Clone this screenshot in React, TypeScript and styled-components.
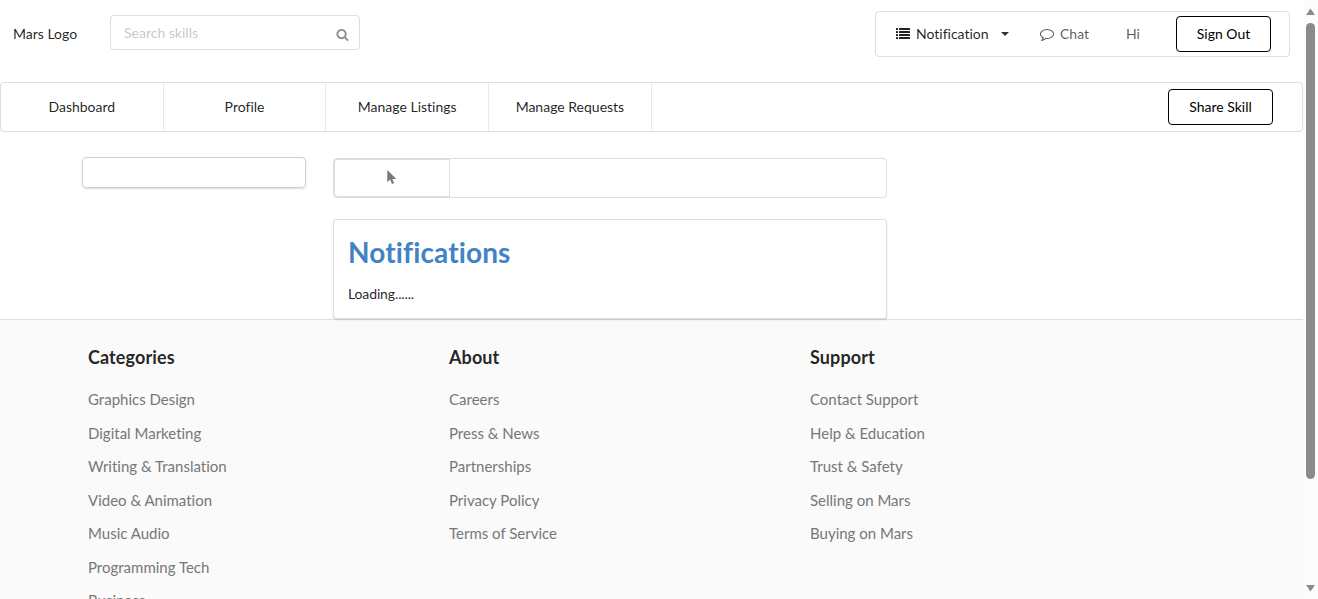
import React from "react";
import styled, { createGlobalStyle } from "styled-components";

const GlobalStyle = createGlobalStyle`
  *, *::before, *::after { box-sizing: border-box; }
  body {
    margin: 0;
    background: #fff;
    color: rgba(0, 0, 0, 0.87);
    font: 14px/20px Lato, "Liberation Sans", sans-serif;
    font-variant-ligatures: none;
    overflow: hidden;
  }
`;

const Window = styled.div`
  display: flex;
  height: 599px;
  overflow: hidden;
`;

const Page = styled.div`
  flex: 0 0 1303px;
  display: flex;
  flex-direction: column;
  overflow: hidden;
`;

const Header = styled.header`
  display: flex;
  flex: none;
  align-items: flex-start;
  height: 82px;
  padding: 11px 13px 0;
`;

const Logo = styled.div`
  width: 97px;
  padding-top: 13px;
`;

const SearchBox = styled.div`
  display: flex;
  align-items: center;
  justify-content: space-between;
  width: 250px;
  height: 35px;
  margin-top: 4px;
  padding: 0 10px 0 13px;
  border: 1px solid rgba(34, 36, 38, 0.15);
  border-radius: 4px;
`;

const SearchInput = styled.input`
  width: 180px;
  padding: 0;
  border: 0;
  outline: 0;
  background: transparent;
  font: inherit;
  font-variant-ligatures: none;
  color: inherit;
  &::placeholder { color: rgba(191, 191, 191, 0.87); }
`;

const Icon = styled.svg<{ $size: number; $opacity?: number }>`
  display: block;
  flex: none;
  width: ${(p) => p.$size}px;
  height: ${(p) => p.$size}px;
  fill: currentColor;
  opacity: ${(p) => p.$opacity ?? 1};
`;

const SearchIconWrap = styled.span`
  padding-top: 4px;
`;

const UserMenu = styled.div`
  display: flex;
  align-items: center;
  width: 415px;
  height: 46px;
  margin-left: auto;
  padding: 0 18px 0 20px;
  border: 1px solid rgba(34, 36, 38, 0.15);
  border-radius: 4px;
`;

const UserItem = styled.span<{ $muted?: boolean; $width: number }>`
  display: flex;
  flex: none;
  align-items: center;
  gap: 6px;
  width: ${(p) => p.$width}px;
  color: ${(p) => (p.$muted ? "rgba(0, 0, 0, 0.66)" : "rgba(0, 0, 0, 0.87)")};
`;

const Caret = styled.i`
  margin-left: 6px;
  border: 4px solid transparent;
  border-top-color: rgba(0, 0, 0, 0.8);
  border-bottom: 0;
`;

const OutlineButton = styled.button<{ $width: number }>`
  flex: none;
  width: ${(p) => p.$width}px;
  height: 36px;
  padding: 0;
  border: 1px solid #000;
  border-radius: 4px;
  background: #fff;
  color: #000;
  font: inherit;
  font-variant-ligatures: none;
`;

const Nav = styled.nav`
  display: flex;
  flex: none;
  align-items: center;
  height: 50px;
  padding-right: 29px;
  border: 1px solid rgba(34, 36, 38, 0.15);
  border-radius: 4px;
`;

const NavItem = styled.a`
  display: flex;
  align-items: center;
  justify-content: center;
  width: 162.7px;
  height: 48px;
  border-right: 1px solid rgba(34, 36, 38, 0.1);
`;

const NavAction = styled.div`
  margin-left: auto;
`;

const Content = styled.main`
  display: flex;
  flex: none;
  align-items: flex-start;
  gap: 27px;
  height: 187px;
  padding: 25px 0 0 82px;
`;

const SidePanel = styled.aside`
  width: 224px;
  height: 31px;
  border: 1px solid #d0d0d1;
  border-radius: 4px;
  box-shadow: 0 1px 2px rgba(34, 36, 38, 0.15);
`;

const Column = styled.section`
  position: relative;
  width: 554px;
  padding-top: 1px;
`;

const TabBar = styled.div`
  height: 40px;
  border: 1px solid rgba(34, 36, 38, 0.15);
  border-radius: 4px;
`;

const Tab = styled.div`
  display: flex;
  align-items: center;
  justify-content: center;
  width: 116px;
  height: 38px;
  padding-bottom: 2px;
  border: 1px solid rgba(34, 36, 38, 0.15);
  border-radius: 3px 0 0 3px;
  color: #777;
`;

const Card = styled.article`
  height: 100px;
  margin-top: 21px;
  padding: 14px;
  border: 1px solid rgba(34, 36, 38, 0.15);
  border-radius: 4px;
  background: #fff;
  box-shadow: 0 1px 2px rgba(34, 36, 38, 0.15);
`;

const Title = styled.h1`
  margin: 0 0 14px;
  color: #4183c4;
  font-size: 28px;
  line-height: 36px;
  font-weight: 700;
  letter-spacing: 0.13px;
`;

const Status = styled.p`
  margin: 0;
  letter-spacing: -0.13px;
`;

const Footer = styled.footer`
  display: flex;
  flex: 1 0 0;
  min-height: 0;
  padding: 25px 88px 0;
  border-top: 1px solid rgba(34, 36, 38, 0.12);
  background: #fafafa;
`;

const FooterColumn = styled.div`
  width: 361px;
`;

const FooterTitle = styled.h3`
  margin: 0 0 13px;
  font-size: 18px;
  line-height: 25px;
  font-weight: 700;
  letter-spacing: 0.1px;
`;

const FooterLinks = styled.ul`
  margin: 0;
  padding: 0;
  list-style: none;
`;

const FooterLink = styled.li`
  height: 33.5px;
  color: #777;
  font-size: 15px;
  line-height: 32px;
`;

const Scrollbar = styled.div`
  display: flex;
  flex: 0 0 15px;
  flex-direction: column;
  align-items: center;
  padding: 8px 0 7px;
  background: #fcfcfc;
`;

const Arrow = styled.svg`
  display: block;
  width: 9px;
  height: 8px;
  fill: #8b8b8b;
`;

const Thumb = styled.div`
  width: 9px;
  height: 456px;
  margin: 7px 0 auto;
  border-radius: 5px;
  background: #8b8b8b;
`;

const navItems = ["Dashboard", "Profile", "Manage Listings", "Manage Requests"];

const footerColumns = [
  {
    title: "Categories",
    links: [
      "Graphics Design",
      "Digital Marketing",
      "Writing & Translation",
      "Video & Animation",
      "Music Audio",
      "Programming Tech",
      "Business",
    ],
  },
  {
    title: "About",
    links: ["Careers", "Press & News", "Partnerships", "Privacy Policy", "Terms of Service"],
  },
  {
    title: "Support",
    links: ["Contact Support", "Help & Education", "Trust & Safety", "Selling on Mars", "Buying on Mars"],
  },
];

const listRows = [1, 4, 7, 10];

export default function App() {
  return (
    <>
      <GlobalStyle />
      <Window>
        <Page>
          <Header>
            <Logo>Mars Logo</Logo>
            <SearchBox>
              <SearchInput placeholder="Search skills" />
              <SearchIconWrap>
                <Icon viewBox="0 0 1792 1792" $size={13} $opacity={0.5}>
                  <path d="M1216 832q0-185-131.5-316.5t-316.5-131.5-316.5 131.5-131.5 316.5 131.5 316.5 316.5 131.5 316.5-131.5 131.5-316.5zm512 832q0 52-38 90t-90 38q-54 0-90-38l-343-342q-179 124-399 124-143 0-273.5-55.5t-225-150-150-225-55.5-273.5 55.5-273.5 150-225 225-150 273.5-55.5 273.5 55.5 225 150 150 225 55.5 273.5q0 220-124 399l343 343q37 37 37 90z" />
                </Icon>
              </SearchIconWrap>
            </SearchBox>
            <UserMenu>
              <UserItem $width={144}>
                <Icon viewBox="0 0 14 14" $size={14}>
                  {listRows.map((y) => (
                    <g key={y}>
                      <rect x="0" y={y} width="2" height="2" rx="0.25" />
                      <rect x="3" y={y} width="11" height="2" rx="0.25" />
                    </g>
                  ))}
                </Icon>
                Notification
                <Caret />
              </UserItem>
              <UserItem $muted $width={86}>
                <Icon viewBox="0 0 1792 1792" $size={14}>
                  <path d="M896 384q-204 0-381.5 69.5t-282 187.5-104.5 255q0 112 71.5 213.5t201.5 175.5l87 50-27 96q-24 91-70 172 152-63 275-171l43-38 57 6q69 8 130 8 204 0 381.5-69.5t282-187.5 104.5-255-104.5-255-282-187.5-381.5-69.5zm896 512q0 174-120 321.5t-326 233-450 85.5q-70 0-145-8-198 175-460 242-49 14-114 22h-5q-15 0-27-10.5t-16-27.5v-1q-3-4-.5-12t2-10 4.5-9.5l6-9 7-8.5 8-9q7-8 31-34.5t34.5-38 31-39.5 32.5-51 27-59 26-76q-157-89-247.5-220t-90.5-281q0-130 71-248.5t191-204.5 286-136.5 348-50.5 348 50.5 286 136.5 191 204.5 71 248.5z" />
                </Icon>
                Chat
              </UserItem>
              <UserItem $muted $width={50}>Hi</UserItem>
              <OutlineButton $width={95}>Sign Out</OutlineButton>
            </UserMenu>
          </Header>
          <Nav>
            {navItems.map((item) => (
              <NavItem key={item}>{item}</NavItem>
            ))}
            <NavAction>
              <OutlineButton $width={105}>Share Skill</OutlineButton>
            </NavAction>
          </Nav>
          <Content>
            <SidePanel />
            <Column>
              <TabBar>
                <Tab>
                  <Icon viewBox="0 0 14 14" $size={14}>
                    <path d="M2.3 0v12.2l2.8-2.6 1.9 4.3 2.1-.9-1.9-4.1h4.1z" />
                  </Icon>
                </Tab>
              </TabBar>
              <Card>
                <Title>Notifications</Title>
                <Status>Loading......</Status>
              </Card>
            </Column>
          </Content>
          <Footer>
            {footerColumns.map((column) => (
              <FooterColumn key={column.title}>
                <FooterTitle>{column.title}</FooterTitle>
                <FooterLinks>
                  {column.links.map((link) => (
                    <FooterLink key={link}>{link}</FooterLink>
                  ))}
                </FooterLinks>
              </FooterColumn>
            ))}
          </Footer>
        </Page>
        <Scrollbar>
          <Arrow viewBox="0 0 9 8">
            <path d="M4.5 .5 9 7h-9z" />
          </Arrow>
          <Thumb />
          <Arrow viewBox="0 0 9 8">
            <path d="M4.5 7.5 9 1h-9z" />
          </Arrow>
        </Scrollbar>
      </Window>
    </>
  );
}
